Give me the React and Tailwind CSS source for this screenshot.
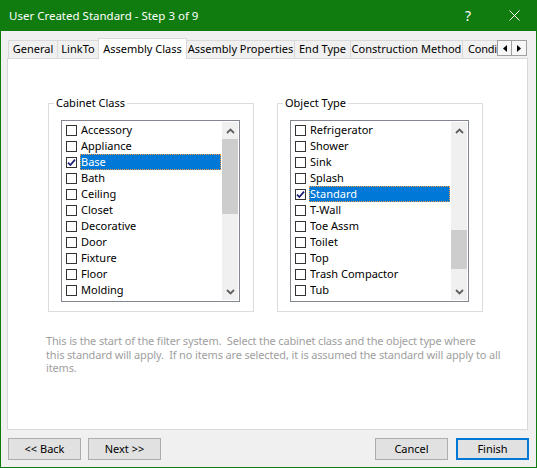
import React from 'react'

const cabinetItems = ['Accessory', 'Appliance', 'Base', 'Bath', 'Ceiling', 'Closet', 'Decorative', 'Door', 'Fixture', 'Floor', 'Molding']
const objectItems = ['Refrigerator', 'Shower', 'Sink', 'Splash', 'Standard', 'T-Wall', 'Toe Assm', 'Toilet', 'Top', 'Trash Compactor', 'Tub']

function Check({ on }) {
  return (
    <div className="w-[11px] h-[11px] border border-[#333333] bg-white flex items-center justify-center">
      {on && (
        <svg width="9" height="9" viewBox="0 0 9 9">
          <path d="M1 4.6 L3.4 7 L8 1.6" fill="none" stroke="#1b1b78" strokeWidth="1.7" />
        </svg>
      )}
    </div>
  )
}

function Chevron({ up }) {
  return (
    <svg width="9" height="6" viewBox="0 0 9 6">
      <path d={up ? 'M1 5 L4.5 1.5 L8 5' : 'M1 1 L4.5 4.5 L8 1'} fill="none" stroke="#606060" strokeWidth="1.8" />
    </svg>
  )
}

function ListBox({ items, selected, spacer, thumb }) {
  return (
    <div className="w-[179px] h-[182px] border border-[#828790] bg-white flex">
      <div className="w-[160px] pt-[1px] flex flex-col">
        {items.map((name) => {
          const sel = name === selected
          return (
            <div key={name} className="h-[16px] flex items-center">
              <div className="ml-[4px]">
                <Check on={sel} />
              </div>
              <div
                className={
                  sel
                    ? 'ml-[3px] mr-[1px] flex-1 h-[16px] flex items-center bg-[#0078d7] text-white border border-dotted border-[#ff9a3c]'
                    : 'ml-[3px] mr-[1px] flex-1 h-[16px] flex items-center pl-[1px] text-black'
                }
              >
                {name}
              </div>
            </div>
          )
        })}
      </div>
      <div className="w-[16px] my-[1px] bg-[#f0f0f0] flex flex-col">
        <div className="h-[17px] flex items-center justify-center">
          <Chevron up />
        </div>
        <div className="flex-1 flex flex-col">
          <div className={spacer} />
          <div className={thumb + ' bg-[#cdcdcd]'} />
        </div>
        <div className="h-[17px] flex items-center justify-center">
          <Chevron />
        </div>
      </div>
    </div>
  )
}

function Group({ title, children }) {
  return (
    <fieldset className="w-[206px] border border-[#dcdcdc] pt-[9px] pb-[9px]">
      <legend className="ml-[5px] px-[2px] leading-[16px] text-black">{title}</legend>
      <div className="ml-[12px]">{children}</div>
    </fieldset>
  )
}

function Tab({ label, className }) {
  return (
    <div className={'h-[18px] bg-[#f0f0f0] border-t border-[#d9d9d9] flex items-center justify-center text-black whitespace-nowrap ' + className}>
      {label}
    </div>
  )
}

function Button({ label, primary }) {
  return (
    <div
      className={
        primary
          ? 'w-[73px] h-[22px] bg-[#e1e1e1] border-2 border-[#0078d7] flex items-center justify-center text-black'
          : 'w-[73px] h-[22px] bg-[#e1e1e1] border border-[#adadad] flex items-center justify-center text-black'
      }
    >
      {label}
    </div>
  )
}

export default function App() {
  return (
    <div className="w-[537px] h-[468px] flex flex-col bg-[#f0f0f0] font-['Noto_Sans',sans-serif] text-[11px] select-none">
      {/* title bar */}
      <div className="h-[31px] bg-[#107c10] flex items-center text-white shrink-0">
        <div className="pl-[9px] flex-1 text-[11.5px]">User Created Standard - Step 3 of 9</div>
        <div className="w-[46px] h-[31px] flex items-center justify-center text-[14px] leading-none">?</div>
        <div className="w-[46px] h-[31px] flex items-center justify-center">
          <svg width="11" height="11" viewBox="0 0 11 11">
            <path d="M0.5 0.5 L10.5 10.5 M10.5 0.5 L0.5 10.5" stroke="white" strokeWidth="1" />
          </svg>
        </div>
      </div>

      <div className="flex-1 flex flex-col border-x border-b border-[#107c10]">
        <div className="ml-[6px] mt-[7px] w-[521px]">
          {/* tabs */}
          <div className="h-[20px] flex items-end pl-[1px]">
            <Tab label="General" className="w-[49px] border-l" />
            <Tab label="LinkTo" className="w-[41px] border-l" />
            <div className="relative z-10 w-[89px] h-[21px] mb-[-1px] bg-white border-x border-t border-[#d9d9d9] flex justify-center pt-[2px] text-black whitespace-nowrap">
              Assembly Class
            </div>
            <Tab label="Assembly Properties" className="w-[107px]" />
            <Tab label="End Type" className="w-[56px] border-l" />
            <Tab label="Construction Method" className="w-[112px] border-l" />
            <div className="w-[35px] h-[18px] bg-[#f0f0f0] border-t border-l border-[#d9d9d9] overflow-hidden flex items-center pl-[5px] text-black whitespace-nowrap tracking-[-0.2px]">
              Condi
            </div>
            <div className="self-start mt-[2px] flex">
              <div className="w-[15px] h-[16px] bg-[#f7f7f7] border border-[#a0a0a0] flex items-center justify-center">
                <svg width="4" height="7" viewBox="0 0 4 7">
                  <path d="M4 0 L0 3.5 L4 7 Z" fill="#000" />
                </svg>
              </div>
              <div className="w-[15px] h-[16px] bg-[#f7f7f7] border border-l-0 border-[#a0a0a0] flex items-center justify-center">
                <svg width="4" height="7" viewBox="0 0 4 7">
                  <path d="M0 0 L4 3.5 L0 7 Z" fill="#000" />
                </svg>
              </div>
            </div>
          </div>

          {/* panel */}
          <div className="h-[372px] bg-white border border-[#d9d9d9] pt-[36px]">
            <div className="flex gap-[23px] pl-[40px]">
              <Group title="Cabinet Class">
                <ListBox items={cabinetItems} selected="Base" spacer="h-[0px]" thumb="h-[75px]" />
              </Group>
              <Group title="Object Type">
                <ListBox items={objectItems} selected="Standard" spacer="h-[91px]" thumb="h-[39px]" />
              </Group>
            </div>
            <div className="ml-[38px] mt-[22px] leading-[13.5px] text-[#a0a0a0] whitespace-pre tracking-[-0.15px]">
              <div>This is the start of the filter system.  Select the cabinet class and the object type where</div>
              <div>this standard will apply.  If no items are selected, it is assumed the standard will apply to all</div>
              <div>items.</div>
            </div>
          </div>
        </div>

        {/* buttons */}
        <div className="mt-[8px] flex">
          <div className="ml-[7px]">
            <Button label="<< Back" />
          </div>
          <div className="ml-[7px]">
            <Button label="Next >>" />
          </div>
          <div className="ml-auto">
            <Button label="Cancel" />
          </div>
          <div className="ml-[8px] mr-[7px]">
            <Button label="Finish" primary />
          </div>
        </div>
      </div>
    </div>
  )
}
